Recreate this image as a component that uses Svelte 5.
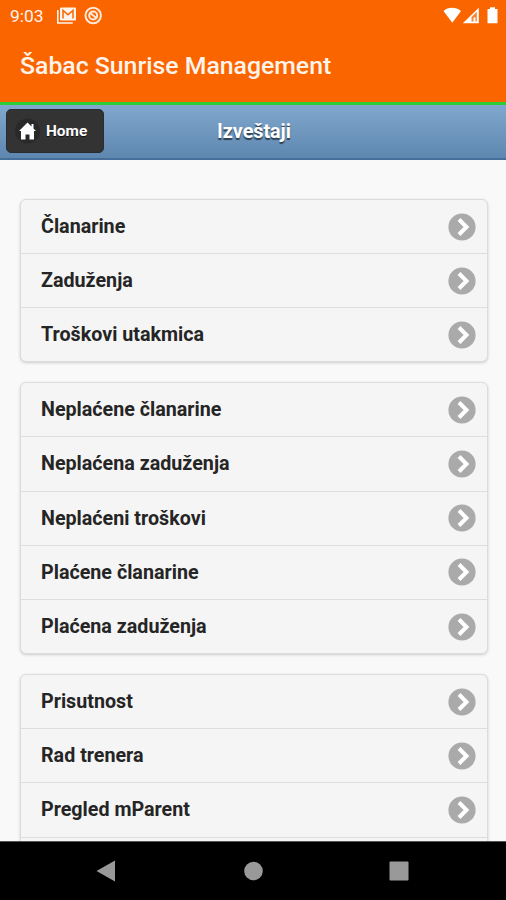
<script>
  let title = "Šabac Sunrise Management";
  let page = "Izveštaji";
  let groups = [
    ["Članarine", "Zaduženja", "Troškovi utakmica"],
    [
      "Neplaćene članarine",
      "Neplaćena zaduženja",
      "Neplaćeni troškovi",
      "Plaćene članarine",
      "Plaćena zaduženja"
    ],
    ["Prisutnost", "Rad trenera", "Pregled mParent", ""]
  ];
</script>

<style>
  :global(body) {
    margin: 0;
  }

  .screen {
    display: flex;
    flex-direction: column;
    width: 506px;
    height: 900px;
    overflow: hidden;
    background: #f9f9f9;
    font-family: Roboto, "Liberation Sans", sans-serif;
  }

  .appbar {
    flex: none;
    box-sizing: border-box;
    height: 105px;
    background: #fb6500;
    border-bottom: 3px solid #2fcb38;
    color: #fff4ec;
  }

  .status {
    display: flex;
    align-items: center;
    height: 31px;
    padding: 0 8px 0 10px;
  }

  .time {
    width: 46px;
    font-size: 17.4px;
    line-height: 32px;
  }

  .status svg {
    flex: none;
    display: block;
  }

  .spacer {
    flex: 1;
  }

  .title {
    margin: 0;
    padding: 18px 0 0 20px;
    font-size: 24.8px;
    font-weight: 500;
    line-height: 34px;
    white-space: nowrap;
  }

  .header {
    flex: none;
    box-sizing: border-box;
    display: grid;
    grid-template-columns: 98px 1fr 98px;
    align-items: start;
    height: 55px;
    padding: 4px 6px 0;
    background: linear-gradient(#81a8ce, #5e87b0);
    border-bottom: 2px solid #456f9a;
  }

  .home {
    box-sizing: border-box;
    display: flex;
    align-items: center;
    width: 98px;
    height: 44px;
    padding: 0 0 1px 8px;
    border: 1px solid #292c30;
    border-radius: 5px;
    background: #333;
    color: #fff;
    font: inherit;
    font-size: 15.4px;
    font-weight: 700;
    text-shadow: 0 1px 0 #111;
  }

  .home svg {
    margin-right: 6px;
  }

  .header h2 {
    margin: 0;
    padding-left: 2px;
    color: #fff;
    font-size: 19.7px;
    font-weight: 700;
    line-height: 46px;
    text-align: center;
    text-shadow: 0 1.5px 1px #2c3f50;
  }

  .content {
    flex: 1;
    min-height: 0;
    overflow: hidden;
    padding: 39px 18px 0 20px;
  }

  .group {
    margin: 0 0 20px;
    padding: 0;
    list-style: none;
    box-sizing: border-box;
    border: 1px solid #dcdcdc;
    border-radius: 6px;
    background: #f5f5f5;
    box-shadow: 0 1px 3px rgba(0, 0, 0, 0.18);
  }

  .row {
    box-sizing: border-box;
    display: flex;
    align-items: center;
    justify-content: space-between;
    height: 53px;
    padding: 0 11px 0 20px;
    color: #252525;
    font-size: 19.7px;
    font-weight: 700;
  }

  .row + .row {
    height: 54.2px;
    border-top: 1px solid #dedede;
  }

  .nav {
    flex: none;
    box-sizing: border-box;
    height: 59px;
    background: #000;
    border-top: 1px solid #555;
  }

  .nav svg {
    display: block;
  }
</style>

<div class="screen">
  <div class="appbar">
    <div class="status">
      <span class="time">9:03</span>
      <svg width="48" height="20" viewBox="0 0 48 20">
        <path d="M1.800 4v13h15" fill="none" stroke="#fff4ec" stroke-width="1.600" />
        <rect x="4" y="1.500" width="16" height="13" rx="1" fill="#fff4ec" />
        <path d="M7 12.500V4.500l5 4.300 5-4.300v8" fill="none" stroke="#fb6500" stroke-width="1.500" />
        <circle cx="37.200" cy="9.500" r="7.700" fill="none" stroke="#ffe9d8" stroke-width="2" />
        <circle cx="37.200" cy="9.500" r="4" fill="none" stroke="#ffe9d8" stroke-width="2" />
        <path d="M33.500 6.500l7.500 6" fill="none" stroke="#ffe9d8" stroke-width="2" />
      </svg>
      <span class="spacer"></span>
      <svg width="56" height="20" viewBox="0 0 56 20">
        <path d="M1.500 5C6 .800 14 .800 19 5L10.300 16.800Z" fill="#fff" />
        <path d="M20.800 17.200L36.800 1.800V17.200Z" fill="#fff" />
        <path d="M29.500 15.500V11L34.800 5.800V15.500h-1.300V11.500H31.500V15.500Z" fill="#fb6500" opacity=".8" />
        <path d="M48 3V1.300h5V3h2.500v14.200h-10V3Z" fill="#fff" />
      </svg>
    </div>
    <h1 class="title">{title}</h1>
  </div>

  <div class="header">
    <button class="home">
      <svg width="25" height="26" viewBox="0 0 25 26">
        <circle cx="12.500" cy="13" r="12.500" fill="#292929" />
        <path d="M12.500 4.500L4 13h2v8.500h4.500v-5h4v5H19V13h2l-2.500-2.500V6h-2v2.500Z" fill="#fff" />
      </svg>
      Home
    </button>
    <h2>{page}</h2>
  </div>

  <div class="content">
    {#each groups as group}
      <ul class="group">
        {#each group as item}
          <li class="row">
            <span>{item}</span>
            <svg width="28" height="28" viewBox="0 0 28 28">
              <circle cx="14" cy="14" r="13.600" fill="#aaa" />
              <path d="M11 6.500L18.500 14L11 21.500" fill="none" stroke="#fff" stroke-width="4" />
            </svg>
          </li>
        {/each}
      </ul>
    {/each}
  </div>

  <div class="nav">
    <svg width="506" height="58" viewBox="0 0 506 58">
      <path d="M96.500 29L115 18.500V39.500Z" fill="#999" />
      <circle cx="253.500" cy="29" r="9.300" fill="#999" />
      <rect x="389.500" y="19.500" width="19" height="19" rx="1" fill="#999" />
    </svg>
  </div>
</div>
